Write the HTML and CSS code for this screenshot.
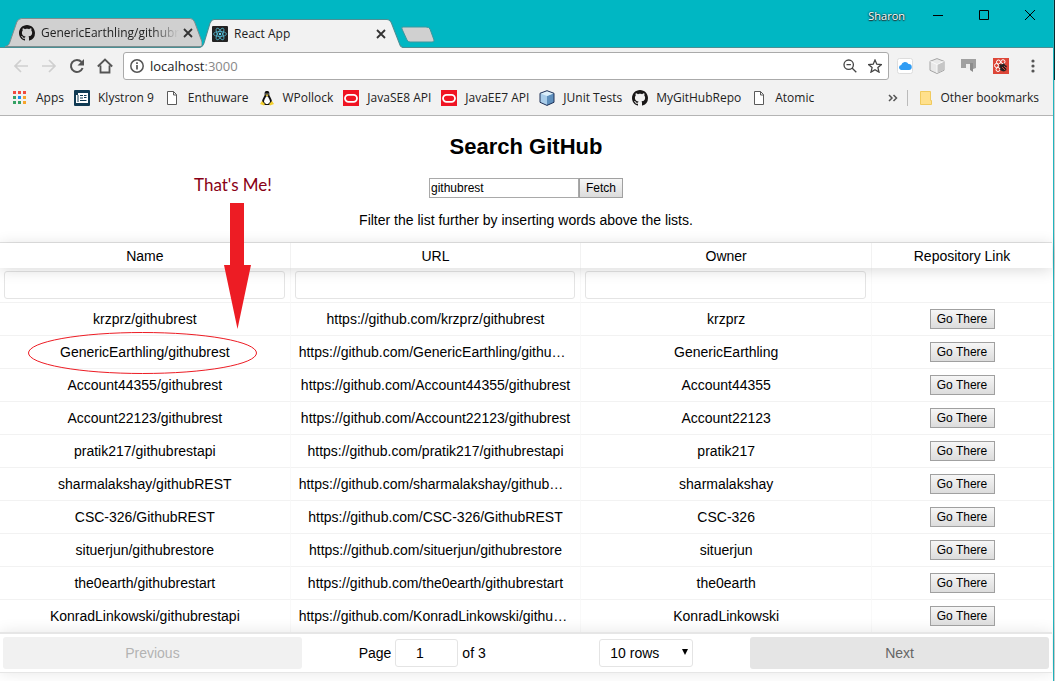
FILE: index.html
```html
<!DOCTYPE html>
<html lang="en">
<head>
<meta charset="utf-8">
<title>React App</title>
<link rel="stylesheet" href="styles.css">
</head>
<body>
<svg class="defs" aria-hidden="true">
  <symbol id="github" viewBox="0 0 16 16"><path fill="#191717" d="M8 0C3.58 0 0 3.58 0 8c0 3.54 2.29 6.53 5.47 7.59.4.07.55-.17.55-.38 0-.19-.01-.82-.01-1.49-2.01.37-2.53-.49-2.69-.94-.09-.23-.48-.94-.82-1.13-.28-.15-.68-.52-.01-.53.63-.01 1.08.58 1.23.82.72 1.21 1.87.87 2.33.66.07-.52.28-.87.51-1.07-1.78-.2-3.64-.89-3.64-3.95 0-.87.31-1.59.82-2.15-.08-.2-.36-1.02.08-2.12 0 0 .67-.21 2.2.82.64-.18 1.32-.27 2-.27s1.36.09 2 .27c1.53-1.04 2.2-.82 2.2-.82.44 1.1.16 1.92.08 2.12.51.56.82 1.27.82 2.15 0 3.07-1.87 3.75-3.65 3.95.29.25.54.73.54 1.48 0 1.07-.01 1.93-.01 2.2 0 .21.15.46.55.38A8.01 8.01 0 0 0 16 8c0-4.42-3.58-8-8-8z"/></symbol>
  <symbol id="page" viewBox="0 0 16 16"><path fill="#fff" stroke="#5a5a5a" d="M3.500 1.500h6l3 3v10h-9zM9.500 1.500v3.500h3"/></symbol>
  <symbol id="oracle" viewBox="0 0 16 16"><path fill="#f01423" d="M0 0h16v16H0z"/><rect x="2" y="4.800" width="12" height="7" rx="3.500" fill="none" stroke="#fff" stroke-width="1.800"/></symbol>
  <symbol id="cross" viewBox="0 0 10 10"><path d="M1 1l8 8M9 1L1 9" stroke="currentColor" stroke-width="1.800"/></symbol>
</svg>
<div class="window">
  <header class="titlebar">
    <div class="tabs">
      <div class="tab">
        <svg class="tab-shape" viewBox="0 0 200 29" preserveAspectRatio="none"><path d="M0 28.500C3 28 4 27 5 24L12 4Q13.500.5 17 .5H188Q191 .5 192.500 4L200 24V28.500z" fill="#d0d0d0" stroke="#7c8c8e"/></svg>
        <svg class="i16"><use href="#github"/></svg>
        <span class="tab-title faded">GenericEarthling/githubrest</span>
        <button class="bare close" aria-label="Close tab"><svg class="i10"><use href="#cross"/></svg></button>
      </div>
      <div class="tab active">
        <svg class="tab-shape" viewBox="0 0 204 29" preserveAspectRatio="none"><path d="M0 29C3 28 4 27 5 24L11 4Q12.500.5 15 .5H187Q190 .5 191.500 4L200 26Q201 28.500 204 28.500V29z" fill="#f2f2f2"/><path d="M0 28.500C3 28 4 27 5 24L11 4Q12.500.5 15 .5H187Q190 .5 191.500 4L200 26Q201 28.500 204 28.500" fill="none" stroke="#4b8f94"/></svg>
        <svg class="i16" viewBox="0 0 16 16"><rect width="16" height="16" rx="1" fill="#222"/><g fill="none" stroke="#53b8d0" stroke-width=".8"><ellipse cx="8" cy="8" rx="6.500" ry="2.500"/><ellipse cx="8" cy="8" rx="6.500" ry="2.500" transform="rotate(60 8 8)"/><ellipse cx="8" cy="8" rx="6.500" ry="2.500" transform="rotate(120 8 8)"/></g><circle cx="8" cy="8" r="1.200" fill="#61dafb"/></svg>
        <span class="tab-title">React App</span>
        <button class="bare close" aria-label="Close tab"><svg class="i10"><use href="#cross"/></svg></button>
      </div>
      <button class="bare new-tab" aria-label="New tab"><svg width="36" height="17" viewBox="0 0 36 17"><path d="M3 1H26Q29 1 30 3L34 14Q34.500 16 32 16H10Q8 16 7 14L2 3Q1 1 3 1z" fill="#d0d0d0" stroke="#3b979e"/></svg></button>
    </div>
    <div class="controls">
      <span class="user">Sharon</span>
      <button class="bare" aria-label="Minimize"><svg class="i12" viewBox="0 0 12 12"><path d="M1 6.500h10" stroke="#000"/></svg></button>
      <button class="bare" aria-label="Maximize"><svg class="i12" viewBox="0 0 12 12"><path d="M1.500 1.500h9v9h-9z" fill="none" stroke="#000"/></svg></button>
      <button class="bare" aria-label="Close"><svg class="i12" viewBox="0 0 12 12"><path d="M1 1l10 10M11 1L1 11" stroke="#000"/></svg></button>
    </div>
  </header>

  <div class="toolbar">
    <button class="bare" aria-label="Back"><svg class="i16" viewBox="0 0 16 16"><path d="M15 8H2M8 2L2 8l6 6" fill="none" stroke="#cfcfcf" stroke-width="1.700"/></svg></button>
    <button class="bare" aria-label="Forward"><svg class="i16" viewBox="0 0 16 16"><path d="M1 8h13M8 2l6 6-6 6" fill="none" stroke="#cfcfcf" stroke-width="1.700"/></svg></button>
    <button class="bare" aria-label="Reload"><svg class="i16" viewBox="0 0 16 16"><path d="M13.600 10A6 6 0 1 1 12.500 4" fill="none" stroke="#555" stroke-width="2"/><path d="M15 1v6.500H8.500z" fill="#555"/></svg></button>
    <button class="bare" aria-label="Home"><svg class="i16" viewBox="0 0 16 16"><path d="M.8 8.500L8 1.500l7.200 7M3.500 7.500v7h9v-7" fill="none" stroke="#555" stroke-width="1.800"/></svg></button>
    <div class="omnibox">
      <svg class="i14" viewBox="0 0 14 14"><circle cx="7" cy="7" r="6.200" fill="none" stroke="#555" stroke-width="1.500"/><path d="M7 6v4.500M7 3.300v1.700" stroke="#555" stroke-width="1.700"/></svg>
      <div class="url" role="textbox" aria-label="Address">localhost<span>:3000</span></div>
      <svg class="i14" viewBox="0 0 14 14"><circle cx="5.700" cy="5.700" r="4.700" fill="none" stroke="#444" stroke-width="1.300"/><path d="M9 9l4.300 4.300M3.500 5.700h4.400" stroke="#444" stroke-width="1.300"/></svg>
      <svg class="i14" viewBox="0 0 14 14"><path d="M7 1l1.800 4.200 4.600.4-3.500 3 1.100 4.500L7 10.700l-4 2.400 1.100-4.500-3.500-3 4.600-.4z" fill="none" stroke="#444" stroke-width="1.300"/></svg>
    </div>
    <div class="extensions">
      <svg class="i16" viewBox="0 0 16 16"><rect x=".5" y=".5" width="15" height="15" rx="2" fill="#fff" stroke="#ddd"/><path d="M4 12a2.600 2.600 0 0 1 .2-5.100A4 4 0 0 1 11.500 6 3 3 0 0 1 12 12z" fill="#2f9cf4"/></svg>
      <svg class="i16" viewBox="0 0 16 16"><path d="M8 .6l7 2.700v9L8 15.500l-7-3.200v-9z" fill="#e9e9e9" stroke="#a4a4a4"/><path d="M8 6.500l6.500-3v8.500L8 15z" fill="#c6c6c6"/><path d="M1.500 3.500l6.500 3 6.500-3M8 6.500V15" fill="none" stroke="#fafafa"/></svg>
      <svg class="i16" viewBox="0 0 16 16"><path d="M0 1h15v9l-3 1V5H9v5H0z" fill="#a0a0a0"/><path d="M5 6h4v5H5z" fill="#eee"/><path d="M9 5h3v9l-3-2z" fill="#8c8c8c"/></svg>
      <svg class="i16" viewBox="0 0 16 16"><path d="M0 0h16v16H0z" fill="#dd4638"/><g fill="none" stroke="#fff"><circle cx="5.500" cy="4" r="2"/><circle cx="10" cy="3.700" r="2"/><circle cx="3.500" cy="7.500" r="2"/><circle cx="5" cy="11.500" r="2"/></g><path d="M6 6l3 .5 2-1.500 1 2 2 1-1 2 .5 2-2.500 1.500L9 13l-2-1 .5-2L6 9l1-1z" fill="#222"/><path d="M9 9l3 3M11 8l2 2" stroke="#dd4638"/></svg>
      <svg class="i16" viewBox="0 0 16 16"><g fill="#555"><circle cx="8" cy="3" r="1.600"/><circle cx="8" cy="8" r="1.600"/><circle cx="8" cy="13" r="1.600"/></g></svg>
    </div>
  </div>

  <nav class="bookmarks" aria-label="Bookmarks">
    <a href="#"><svg class="i16" viewBox="0 0 16 16"><g fill="#f04a3e"><path d="M1 1h3v3H1zM6 1h3v3H6zM11 1h3v3h-3z"/></g><path d="M1 6h3v3H1zM1 11h3v3H1zM6 11h3v3H6z" fill="#35a264"/><path d="M6 6h3v3H6z" fill="#168df0"/><path d="M11 6h3v3h-3zM11 11h3v3h-3z" fill="#f7a52c"/></svg><span>Apps</span></a>
    <a href="#"><svg class="i16" viewBox="0 0 16 16"><rect width="16" height="16" rx="1" fill="#103a53"/><path d="M4 3h10v10H2V5h2z" fill="#fff"/><path d="M4 5v7" stroke="#103a53"/><path d="M6 5.500h3M6 8h3M10 5.500h2.500M10 7.500h2.500M6 10.500h6.500" stroke="#103a53"/></svg><span>Klystron 9</span></a>
    <a href="#"><svg class="i16"><use href="#page"/></svg><span>Enthuware</span></a>
    <a href="#"><svg class="i16" viewBox="0 0 16 16"><path d="M8 1C5.500 1 5.500 3 5.700 5 5 7 3 9 3 12l2 3h6l2-3c0-3-2-5-2.700-7C10.500 3 10.500 1 8 1z" fill="#111"/><path d="M8 6c-1.500 1-3 4-3 6l2 2h2l2-2c0-2-1.500-5-3-6z" fill="#fff"/><path d="M7 3.500v1M9 3.500v1" stroke="#fff"/><path d="M6.500 5L8 4.500 9.500 5 8 6.500zM3 11l3 3-1 1.500L1 14zM13 11l-3 3 1 1.500 4-1.500z" fill="#f3cf2d"/></svg><span>WPollock</span></a>
    <a href="#"><svg class="i16"><use href="#oracle"/></svg><span>JavaSE8 API</span></a>
    <a href="#"><svg class="i16"><use href="#oracle"/></svg><span>JavaEE7 API</span></a>
    <a href="#"><svg class="i16" viewBox="0 0 16 16"><path d="M8 .7l7 2.600v9L8 15.400l-7-3.100v-9z" fill="#a9cdea"/><path d="M8 6l7-2.700v9L8 15.400z" fill="#5e8fbd"/><path d="M1 3.300L8 .7l7 2.600L8 6z" fill="#dceffa"/><path d="M8 .7l7 2.600v9L8 15.400l-7-3.100v-9z" fill="none" stroke="#1f3157"/></svg><span>JUnit Tests</span></a>
    <a href="#"><svg class="i16"><use href="#github"/></svg><span>MyGitHubRepo</span></a>
    <a href="#"><svg class="i16"><use href="#page"/></svg><span>Atomic</span></a>
    <div class="more">
      <button class="bare" aria-label="More bookmarks"><svg class="i12" viewBox="0 0 12 12"><path d="M2 3l3 3-3 3M6.500 3l3 3-3 3" fill="none" stroke="#555" stroke-width="1.500"/></svg></button>
      <a href="#" class="other"><svg class="i16" viewBox="0 0 16 16"><path d="M2.500 1.500h10v9h1v4h-11z" fill="#ffe08c" stroke="#f0ca5e"/></svg><span>Other bookmarks</span></a>
    </div>
  </nav>

  <main class="page">
    <h1>Search GitHub</h1>
    <form class="search">
      <input type="text" value="githubrest" aria-label="Search term"><button type="button">Fetch</button>
    </form>
    <p class="hint">Filter the list further by inserting words above the lists.</p>

    <table class="repos">
      <colgroup><col><col><col><col class="col-link"></colgroup>
      <thead>
        <tr><th>Name</th><th>URL</th><th>Owner</th><th>Repository Link</th></tr>
      </thead>
      <tbody>
        <tr class="filters"><td><input type="text" aria-label="Filter by name"></td><td><input type="text" aria-label="Filter by URL"></td><td><input type="text" aria-label="Filter by owner"></td><td></td></tr>
        <tr><td>krzprz/githubrest</td><td>https://github.com/krzprz/githubrest</td><td>krzprz</td><td><button>Go There</button></td></tr>
        <tr><td>GenericEarthling/githubrest</td><td>https://github.com/GenericEarthling/githubrest</td><td>GenericEarthling</td><td><button>Go There</button></td></tr>
        <tr><td>Account44355/githubrest</td><td>https://github.com/Account44355/githubrest</td><td>Account44355</td><td><button>Go There</button></td></tr>
        <tr><td>Account22123/githubrest</td><td>https://github.com/Account22123/githubrest</td><td>Account22123</td><td><button>Go There</button></td></tr>
        <tr><td>pratik217/githubrestapi</td><td>https://github.com/pratik217/githubrestapi</td><td>pratik217</td><td><button>Go There</button></td></tr>
        <tr><td>sharmalakshay/githubREST</td><td>https://github.com/sharmalakshay/githubREST</td><td>sharmalakshay</td><td><button>Go There</button></td></tr>
        <tr><td>CSC-326/GithubREST</td><td>https://github.com/CSC-326/GithubREST</td><td>CSC-326</td><td><button>Go There</button></td></tr>
        <tr><td>situerjun/githubrestore</td><td>https://github.com/situerjun/githubrestore</td><td>situerjun</td><td><button>Go There</button></td></tr>
        <tr><td>the0earth/githubrestart</td><td>https://github.com/the0earth/githubrestart</td><td>the0earth</td><td><button>Go There</button></td></tr>
        <tr><td>KonradLinkowski/githubrestapi</td><td>https://github.com/KonradLinkowski/githubrestapi</td><td>KonradLinkowski</td><td><button>Go There</button></td></tr>
      </tbody>
    </table>

    <div class="pagination">
      <button class="step" disabled>Previous</button>
      <div class="pager">
        <label class="page-jump">Page <input type="text" value="1"> of 3</label>
        <span class="select"><select aria-label="Rows per page"><option>10 rows</option></select></span>
      </div>
      <button class="step">Next</button>
    </div>

    <div class="callout">
      <span class="callout-text">That's Me!</span>
      <svg width="260" height="180" viewBox="0 0 260 180"><path d="M230 6h14v62h7l-13.500 64L224 68h6z" fill="#ed1c24"/><ellipse cx="142.500" cy="156" rx="114" ry="20.500" fill="none" stroke="#ed1c24"/></svg>
    </div>
  </main>
</div>
</body>
</html>
```
FILE: styles.css
```css
* { box-sizing: border-box; }

body {
  margin: 0;
  background: linear-gradient(#0d2a2d 80px, #cfcfcf 80px);
  overflow: hidden;
}

svg { display: block; flex: none; }
.defs { position: absolute; width: 0; height: 0; }
.i10 { width: 10px; height: 10px; }
.i12 { width: 12px; height: 12px; }
.i14 { width: 14px; height: 14px; }
.i16 { width: 16px; height: 16px; }

.bare {
  display: flex;
  padding: 0;
  border: 0;
  background: none;
  color: #333;
}

.window {
  min-height: 100vh;
  margin-right: 1px;
  border-right: 1px solid #1fb5be;
  background: #fff;
  font: 12px/16px "Open Sans", "Noto Sans", sans-serif;
  color: #222;
}

/* Title bar */
.titlebar {
  display: flex;
  justify-content: space-between;
  height: 48px;
  background: #00b7c3;
  border-bottom: 1px solid #4b8f94;
}

.tabs { display: flex; align-items: flex-end; padding-left: 5px; }

.tab {
  position: relative;
  display: flex;
  align-items: center;
  width: 197px;
  height: 29px;
  padding: 0 7px 0 14px;
  gap: 6px;
}

.tab.active {
  width: 205px;
  margin: 0 0 -1px -3px;
  padding: 0 16px 0 13px;
}

.tab-shape { position: absolute; left: 0; top: 0; width: 100%; height: 100%; }
.tab > :not(.tab-shape) { position: relative; }
.tab-title { flex: 1; overflow: hidden; white-space: nowrap; }
.faded { margin-right: -4px; mask-image: linear-gradient(to right, #000 80%, transparent); }
.close { padding: 2px; }
.new-tab { margin-left: -4px; padding-bottom: 4px; }

.controls { display: flex; gap: 34px; padding: 9px 17px 0 0; }
.controls .user {
  margin-right: -7px;
  font-size: 11px;
  line-height: 14px;
  color: #fff;
  text-shadow: 0 0 2px #000, 0 1px 1px #333;
}
.controls .bare { height: 12px; }

/* Toolbar */
.toolbar {
  display: flex;
  align-items: center;
  gap: 12px;
  padding: 4px 12px 4px 13px;
  background: #f2f2f2;
}

.omnibox {
  display: flex;
  flex: 1;
  align-items: center;
  gap: 11px;
  height: 28px;
  margin-left: -2px;
  padding: 0 6px;
  border: 1px solid #aaa;
  border-radius: 3px;
  background: #fff;
}

.url { flex: 1; margin-left: -5px; font-size: 13px; }
.url span { color: #888; }

.extensions { display: flex; gap: 16px; margin-left: -4px; }

/* Bookmarks */
.bookmarks {
  display: flex;
  align-items: center;
  gap: 10px;
  height: 32px;
  padding: 0 14px 4px 12px;
  border-bottom: 1px solid #b4b4b4;
  background: #f2f2f2;
  white-space: nowrap;
}

.bookmarks a {
  display: flex;
  align-items: center;
  gap: 8px;
  color: #222;
  text-decoration: none;
}

.more { display: flex; align-items: center; gap: 8px; margin-left: auto; }
.bookmarks .other { gap: 6px; padding-left: 10px; border-left: 1px solid #bbb; }

/* Page */
.page {
  position: relative;
  padding-right: 1px;
  font: 14px/18px "Liberation Sans", Arial, sans-serif;
  color: #000;
  text-align: center;
}

h1 { margin: 0; padding: 18px 0; font-size: 22px; line-height: 26px; }

.page button, .page input, .page select { font-family: inherit; color: inherit; }

.search { display: flex; justify-content: center; }
.search input {
  width: 150px;
  height: 20px;
  padding: 1px;
  border: 1px solid #a9a9a9;
  font-size: 12px;
}

.search button, .repos button {
  height: 20px;
  padding: 0 6px;
  border: 1px solid #a0a0a0;
  background: linear-gradient(#f6f6f6, #dcdcdc);
  font-size: 12px;
}

.hint { margin: 0; padding: 13px 0; }

.repos {
  width: 100%;
  table-layout: fixed;
  border-collapse: separate;
  border-spacing: 0;
  border-top: 1px solid #e4e4e4;
}

.col-link { width: 180px; }
.repos thead { position: relative; box-shadow: 0 2px 15px rgba(0, 0, 0, 0.15); }
.repos th {
  height: 25px;
  padding: 0;
  border-right: 1px solid #f2f2f2;
  background: #fff;
  font-weight: 400;
}
.repos td {
  height: 33px;
  padding: 0 8px;
  overflow: hidden;
  border-right: 1px solid #f9f9f9;
  border-bottom: 1px solid #f2f2f2;
  text-overflow: ellipsis;
  white-space: nowrap;
}
.repos th:last-child, .repos td:last-child { border-right: 0; }
.repos tr:last-child td { height: 32px; border-bottom: 0; }
.repos button { width: 65px; display: inline-block; vertical-align: middle; }

.repos .filters td { height: 35px; padding: 0 5px 0 4px; }
.filters input {
  display: block;
  width: 100%;
  height: 28px;
  padding: 4px 6px;
  border: 1px solid #e4e4e4;
  border-radius: 3px;
}

/* Pagination */
.pagination {
  display: flex;
  padding: 3px;
  border-top: 2px solid #e6e6e6;
  border-bottom: 1px solid #e6e6e6;
  box-shadow: 0 0 15px rgba(0, 0, 0, 0.1);
}

.step {
  flex: 1;
  height: 32px;
  padding: 0;
  border: 0;
  border-radius: 3px;
  background: #e5e5e5;
  font-size: 14px;
}
.page .step { color: #666; }
.page .step:disabled { background: #f1f1f1; color: #b3b3b3; }

.pager {
  display: flex;
  flex: 1.5;
  align-items: center;
  justify-content: space-around;
}

.page-jump { display: flex; align-items: center; gap: 4px; }
.page-jump input {
  width: 63px;
  height: 28px;
  padding: 0 14px 0 0;
  border: 1px solid #e4e4e4;
  border-radius: 3px;
  font-size: 14px;
  text-align: center;
}

.select { position: relative; }
.select select {
  display: block;
  width: 94px;
  height: 28px;
  padding: 0 10px;
  appearance: none;
  border: 1px solid #e4e4e4;
  border-radius: 3px;
  background: #fff;
  font-size: 14px;
}
.select::after {
  content: "";
  position: absolute;
  right: 5px;
  top: 10px;
  border: 3px solid transparent;
  border-top: 6px solid #000;
  border-bottom: 0;
}

/* Hand-drawn callout over the table */
.callout { position: absolute; left: 0; top: 57px; pointer-events: none; }
.callout-text {
  display: block;
  padding-left: 194px;
  font: 17px/24px Lato, sans-serif;
  color: #880015;
}
```
